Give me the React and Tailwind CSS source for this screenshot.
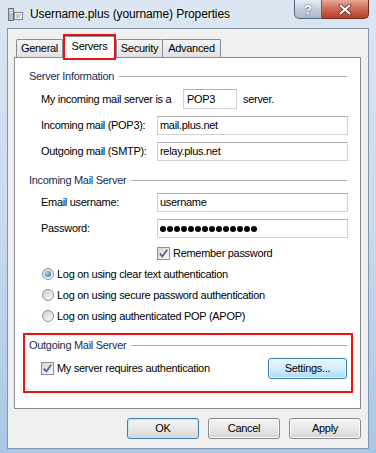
import React from 'react';

const FONT = "font-['Liberation_Sans',Arial,sans-serif]";

const CheckBox = () => (
  <span className="w-[13px] h-[13px] shrink-0 border border-[#8f8f8f] bg-linear-to-br from-[#d6d6d6] to-[#f9f9f9] flex items-center justify-center">
    <svg width="11" height="11" viewBox="0 0 11 11">
      <path d="M1.8 5.6 L4.3 8.4 L9.2 1.8" stroke="#4b5f99" strokeWidth="1.7" fill="none" />
    </svg>
  </span>
);

const Radio = ({ on }) => (
  <span className="w-[12px] h-[12px] shrink-0 rounded-full border border-[#8e8f8f] bg-linear-to-br from-[#cfcfcf] to-[#fbfbfb] flex items-center justify-center">
    {on && <span className="w-[6px] h-[6px] rounded-full bg-radial-[at_35%_35%] from-[#a9d6f7] to-[#1d5a8c]" />}
  </span>
);

const Field = ({ children, className = '' }) => (
  <div className={`h-[19px] bg-white border border-[#cdd0d6] border-t-[#abadb3] flex items-center pl-[2px] ${className}`}>
    {children}
  </div>
);

const GroupHeader = ({ title }) => (
  <div className="h-[16px] flex items-center pr-[13px]">
    <span className="text-[#1c2c55]">{title}</span>
    <div className="flex-1 h-px bg-[#a9a9a9] ml-[5px]" />
  </div>
);

const Tab = ({ label, className = '' }) => (
  <div className={`h-[18px] border-l border-t border-r border-[#898c95] rounded-t-[2px] bg-linear-to-b from-[#f5f5f5] to-[#e1e1e1] flex items-center justify-center ${className}`}>
    {label}
  </div>
);

const DlgButton = ({ label, primary }) => (
  <button
    className={`w-[72px] h-[21px] rounded-[3px] border ${
      primary
        ? 'border-[#3c7fb1] shadow-[inset_0_0_0_1px_#c5e6fa]'
        : 'border-[#8a8a8a] shadow-[inset_0_0_0_1px_#fbfbfb]'
    } bg-linear-to-b from-[#f4f4f4] via-[#e9e9e9] to-[#d4d4d4] text-black`}
  >
    {label}
  </button>
);

export default function App() {
  const radios = [
    { label: 'Log on using clear text authentication', on: true },
    { label: 'Log on using secure password authentication', on: false },
    { label: 'Log on using authenticated POP (APOP)', on: false },
  ];

  return (
    <div className={`w-[376px] h-[453px] overflow-hidden flex flex-col px-[7px] bg-linear-to-b from-[#dbe6f2] via-[#c8daee] to-[#a9c7e8] ${FONT}`}>
      {/* title bar */}
      <div className="h-[28px] shrink-0 flex items-start">
        <div className="h-[28px] flex items-center pl-px">
          <svg width="15" height="13" viewBox="0 0 15 13">
            <rect x="0.5" y="0.5" width="5" height="12" fill="#b9bec6" stroke="#6c737d" />
            <rect x="1.5" y="2" width="3" height="1" fill="#eef1f4" />
            <rect x="1.5" y="4" width="3" height="1" fill="#eef1f4" />
            <rect x="6.5" y="4.5" width="8" height="7" fill="#f4f4f4" stroke="#7d848d" />
            <rect x="8" y="6.5" width="5" height="1" fill="#9aa2ab" />
            <rect x="8" y="8.5" width="4" height="1" fill="#9aa2ab" />
          </svg>
          <span className="ml-[7px] text-[12px] tracking-[-0.1px] text-black [text-shadow:0_0_6px_#ffffff]">
            Username.plus (yourname) Properties
          </span>
        </div>
        <div className="ml-auto flex h-[19px]">
          <div className="w-[28px] h-[19px] border border-[#5a6779] border-t-0 rounded-bl-[5px] bg-linear-to-b from-[#e6edf5] via-[#c3cfdd] to-[#a9b9cc] flex items-center justify-center">
            <span className="text-[13px] font-bold text-white leading-none [text-shadow:0_0_2px_#333a44]">?</span>
          </div>
          <div className="w-[47px] h-[19px] border border-[#6b2c22] border-t-0 border-l-0 rounded-br-[5px] bg-linear-to-b from-[#e8a898] via-[#cf6a55] to-[#b7402b] flex items-center justify-center">
            <svg width="14" height="11" viewBox="0 0 14 11">
              <path d="M2.5 1.5 L11.5 9.5 M11.5 1.5 L2.5 9.5" stroke="#5a2a22" strokeWidth="3.6" strokeLinecap="round" />
              <path d="M2.5 1.5 L11.5 9.5 M11.5 1.5 L2.5 9.5" stroke="#ffffff" strokeWidth="2" strokeLinecap="round" />
            </svg>
          </div>
        </div>
      </div>

      {/* client area */}
      <div className="h-[421px] shrink-0 bg-[#f0f0f0] border border-[#8495aa] pl-[6px] pr-[7px] pt-[6px] flex flex-col text-[11px] tracking-[-0.3px] text-black">
        {/* tabs */}
        <div className="relative z-10 h-[22px] flex items-end pl-[2px]">
          <Tab label="General" className="w-[47px]" />
          <div className="relative w-[53px] h-[22px] -mb-px border-l border-t border-r border-[#898c95] rounded-t-[2px] bg-white flex items-center justify-center pb-[2px]">
            Servers
            <div className="absolute -left-[1px] -right-[1px] -top-[3px] -bottom-[2px] border-2 border-[#ee1111]" />
          </div>
          <Tab label="Security" className="w-[47px]" />
          <Tab label="Advanced" className="w-[59px] -ml-px" />
        </div>

        {/* panel */}
        <div className="relative h-[352px] shrink-0 bg-white border border-[#898c95] pl-[14px] pt-[10px]">
          <GroupHeader title="Server Information" />

          <div className="mt-[5px] h-[20px] pl-[12px] flex items-center">
            <span className="w-[142px] shrink-0">My incoming mail server is a</span>
            <div className="w-[54px] h-[20px] border border-[#cdd0d6] border-t-[#abadb3] flex items-center pl-[3px]">POP3</div>
            <span className="ml-[6px]">server.</span>
          </div>

          <div className="mt-[7px] pl-[12px] flex items-center">
            <span className="w-[116px] shrink-0">Incoming mail (POP3):</span>
            <Field className="w-[191px]">mail.plus.net</Field>
          </div>

          <div className="mt-[7px] pl-[12px] flex items-center">
            <span className="w-[116px] shrink-0">Outgoing mail (SMTP):</span>
            <Field className="w-[191px]">relay.plus.net</Field>
          </div>

          <div className="mt-[11px]">
            <GroupHeader title="Incoming Mail Server" />
          </div>

          <div className="mt-[5px] pl-[12px] flex items-center">
            <span className="w-[116px] shrink-0">Email username:</span>
            <Field className="w-[191px]">username</Field>
          </div>

          <div className="mt-[7px] pl-[12px] flex items-center">
            <span className="w-[116px] shrink-0">Password:</span>
            <Field className="w-[191px] gap-[1px] pl-[2px]">
              {Array.from({ length: 14 }).map((_, i) => (
                <span key={i} className="w-[6px] h-[6px] rounded-full bg-black" />
              ))}
            </Field>
          </div>

          <div className="mt-[8px] h-[14px] pl-[128px] flex items-center gap-[3px]">
            <CheckBox />
            <span>Remember password</span>
          </div>

          <div className="mt-[6px] flex flex-col gap-[5px]">
            {radios.map((r) => (
              <div key={r.label} className="h-[16px] pl-[13px] flex items-center gap-[3px]">
                <Radio on={r.on} />
                <span>{r.label}</span>
              </div>
            ))}
          </div>

          <div className="mt-[13px]">
            <GroupHeader title="Outgoing Mail Server" />
          </div>

          <div className="mt-[5px] h-[21px] pl-[12px] pr-[13px] flex items-center">
            <CheckBox />
            <span className="ml-[3px]">My server requires authentication</span>
            <button className="ml-auto w-[79px] h-[21px] rounded-[3px] border border-[#3c7fb1] shadow-[inset_0_0_0_1px_#eaf6fd] bg-linear-to-b from-[#eaf6fd] via-[#d4eefc] to-[#a9daf6] text-black">
              Settings...
            </button>
          </div>

          {/* highlight box */}
          <div className="absolute left-[8px] top-[275px] w-[330px] h-[60px] border-2 border-[#ee1111]" />
        </div>

        {/* dialog buttons */}
        <div className="mt-[9px] flex justify-end gap-[9px]">
          <DlgButton label="OK" primary />
          <DlgButton label="Cancel" />
          <DlgButton label="Apply" />
        </div>
      </div>
    </div>
  );
}
